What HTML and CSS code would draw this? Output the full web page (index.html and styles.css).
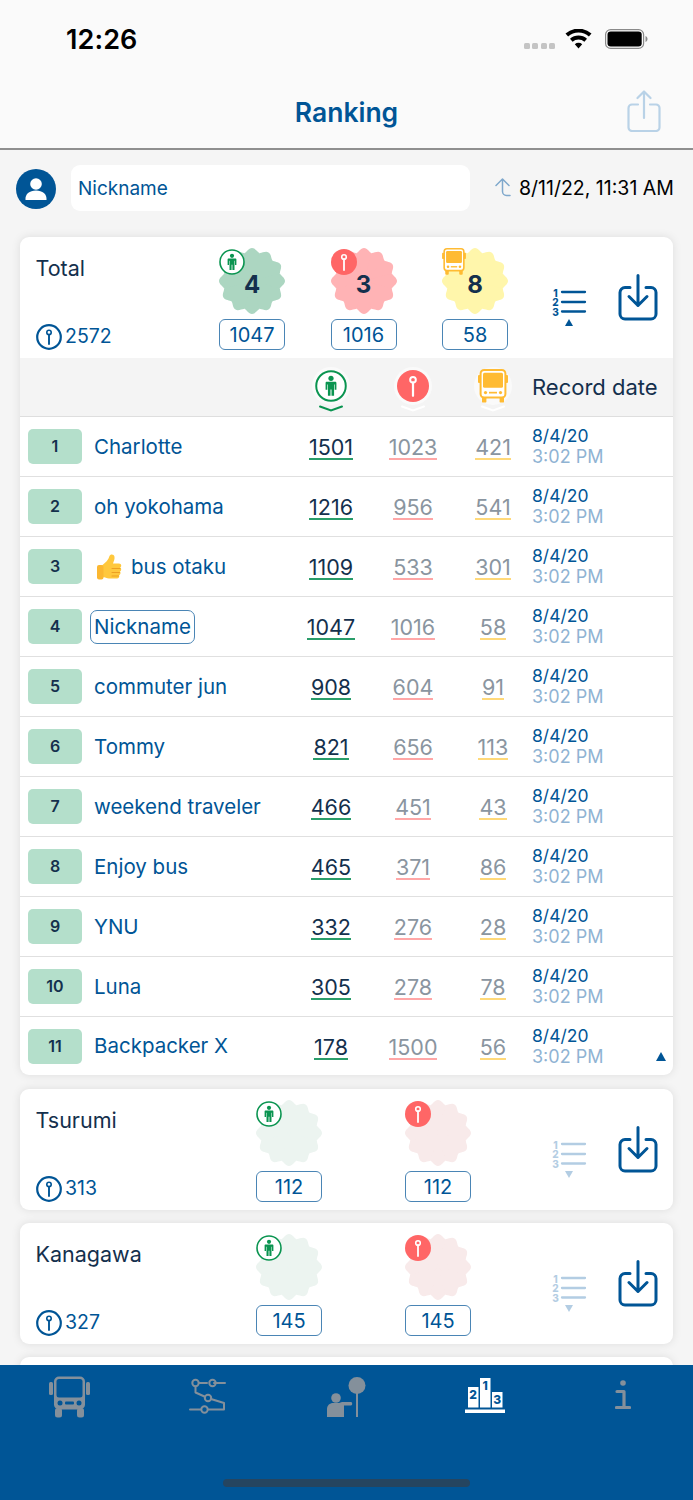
FILE: index.html
```html
<!DOCTYPE html>
<html lang="en">
<head>
<meta charset="utf-8">
<title>Ranking</title>
<link rel="stylesheet" href="styles.css">
</head>
<body>
<svg class="defs" aria-hidden="true">
  <symbol id="burst" viewBox="-33 -33 66 66">
    <circle r="28.400"/>
    <path id="lobe" d="M0 0L-7.500-28C-5.500-28.500-3.500-33 0-33S5.500-28.500 7.500-28Z"/>
    <use href="#lobe" transform="rotate(30)"/><use href="#lobe" transform="rotate(60)"/><use href="#lobe" transform="rotate(90)"/><use href="#lobe" transform="rotate(120)"/><use href="#lobe" transform="rotate(150)"/><use href="#lobe" transform="rotate(180)"/><use href="#lobe" transform="rotate(210)"/><use href="#lobe" transform="rotate(240)"/><use href="#lobe" transform="rotate(270)"/><use href="#lobe" transform="rotate(300)"/><use href="#lobe" transform="rotate(330)"/>
  </symbol>
  <symbol id="person" viewBox="0 0 26 26">
    <circle cx="13" cy="13" r="12" fill="#fff" stroke="#0a9450" stroke-width="1.600"/>
    <circle cx="13" cy="6.800" r="2.100" fill="#0a9450"/>
    <path d="M9.600 9.600h6.800c.6 0 1 .4 1 1v5.400h-1.400v-4.200h-.5V21h-2.100v-5.200h-.8V21h-2.100v-9.200H10V16H8.600v-5.400c0-.6.4-1 1-1z" fill="#0a9450"/>
  </symbol>
  <symbol id="pin-red" viewBox="0 0 26 26">
    <circle cx="13" cy="13" r="13" fill="#ff6666"/>
    <circle cx="13" cy="8" r="2.300" fill="none" stroke="#fff" stroke-width="1.600"/>
    <path d="M13 10v11" stroke="#fff" stroke-width="1.800" stroke-linecap="round"/>
  </symbol>
  <symbol id="bus-gold" viewBox="0 0 30 34">
    <rect x="2.600" y="1" width="24.800" height="27.500" rx="3.500" fill="#fff" stroke="#ffbb33" stroke-width="2"/>
    <rect x="5" y="3.800" width="20" height="15" rx="1.500" fill="#ffbb33"/>
    <rect x="0" y="6" width="2.600" height="8" rx="1" fill="#ffbb33"/>
    <rect x="27.400" y="6" width="2.600" height="8" rx="1" fill="#ffbb33"/>
    <circle cx="7.500" cy="23.600" r="1.600" fill="#ffbb33"/><circle cx="22.500" cy="23.600" r="1.600" fill="#ffbb33"/>
    <rect x="11" y="22.800" width="8" height="1.700" fill="#ffbb33"/>
    <rect x="4" y="28" width="4.400" height="5.600" rx="1.200" fill="#ffbb33"/><rect x="21.600" y="28" width="4.400" height="5.600" rx="1.200" fill="#ffbb33"/>
  </symbol>
  <symbol id="pin-outline" viewBox="0 0 26 26">
    <circle cx="13" cy="13" r="11.800" fill="none" stroke="#005596" stroke-width="2.200"/>
    <circle cx="13" cy="8.400" r="2.200" fill="none" stroke="#005596" stroke-width="1.600"/>
    <path d="M13 10.600V20" stroke="#005596" stroke-width="1.900" stroke-linecap="round"/>
  </symbol>
  <symbol id="download" viewBox="0 0 40 47">
    <path d="M12 13.500H7a5 5 0 0 0-5 5V40a5 5 0 0 0 5 5h26a5 5 0 0 0 5-5V18.500a5 5 0 0 0-5-5h-5M20 1.500v30M11 22.500l9 9 9-9" fill="none" stroke="#005596" stroke-width="3" stroke-linecap="round" stroke-linejoin="round"/>
  </symbol>
</svg>

<div class="screen">
  <header class="top">
    <div class="status">
      <span class="time">12:26</span>
      <div class="status-icons">
        <span class="dots"><i></i><i></i><i></i><i></i></span>
        <svg class="wifi" viewBox="0 0 27 20"><path d="M13.500 19.500l-3.700-4.300a5.500 5.500 0 0 1 7.400 0zM7.600 12.700L5 9.800a12.500 12.500 0 0 1 17 0l-2.600 2.900a8.700 8.700 0 0 0-11.800 0zM3.100 7.500L.5 4.600a19.500 19.500 0 0 1 26 0l-2.600 2.900a15.600 15.600 0 0 0-20.800 0z" fill="#000"/></svg>
        <svg class="battery" viewBox="0 0 43 20"><rect x=".6" y=".6" width="38" height="18.800" rx="5" fill="none" stroke="#8a8a8a" stroke-width="1.200"/><rect x="2.500" y="2.500" width="34.200" height="15" rx="3.300" fill="#000"/><path d="M40.500 7v6c1.300-.5 2-1.700 2-3s-.7-2.500-2-3z" fill="#8a8a8a"/></svg>
      </div>
    </div>
    <div class="nav">
      <h1 class="title">Ranking</h1>
      <svg class="share" viewBox="0 0 34 42"><path d="M11 14.500H5a3.500 3.500 0 0 0-3.500 3.500v19.500A3.500 3.500 0 0 0 5 41h24a3.500 3.500 0 0 0 3.500-3.500V18a3.500 3.500 0 0 0-3.500-3.500h-6M17 28V1.500M10.500 8L17 1.500 23.500 8" fill="none" stroke="#b9d2e7" stroke-width="2.200" stroke-linecap="round" stroke-linejoin="round"/></svg>
    </div>
  </header>

  <main class="main">
    <div class="user">
      <svg class="avatar" viewBox="0 0 40 40"><circle cx="20" cy="20" r="20" fill="#005596"/><circle cx="20" cy="15" r="5.800" fill="#fff"/><path d="M9.500 31c-.6-6 4-9.500 10.500-9.500S31 25 30.500 31z" fill="#fff"/></svg>
      <div class="nick-input">Nickname</div>
      <svg class="sync" viewBox="0 0 17 19"><path d="M8.500 1.500v12a4 4 0 0 0 4 4h3.500M2 7.500l6.500-6.500 6.500 6.500" fill="none" stroke="#7fa8cc" stroke-width="1.500" stroke-linecap="round" stroke-linejoin="round"/></svg>
      <span class="sync-date">8/11/22, 11:31 AM</span>
    </div>

    <div class="cards">
      <section class="card card-total">
        <div class="summary">
          <div class="sum-left sum-left-total">
            <div class="area">Total</div>
            <div class="count"><svg class="count-pin"><use href="#pin-outline"/></svg>2572</div>
          </div>
          <div class="stats stats-total">
            <div class="stat">
              <div class="burst-wrap">
                <svg class="burst green"><use href="#burst"/></svg>
                <svg class="burst-icon"><use href="#person"/></svg>
                <span class="burst-num">4</span>
              </div>
              <div class="pill">1047</div>
            </div>
            <div class="stat">
              <div class="burst-wrap">
                <svg class="burst pink"><use href="#burst"/></svg>
                <svg class="burst-icon"><use href="#pin-red"/></svg>
                <span class="burst-num">3</span>
              </div>
              <div class="pill">1016</div>
            </div>
            <div class="stat">
              <div class="burst-wrap">
                <svg class="burst yellow"><use href="#burst"/></svg>
                <svg class="burst-icon burst-bus"><use href="#bus-gold"/></svg>
                <span class="burst-num">8</span>
              </div>
              <div class="pill">58</div>
            </div>
          </div>
          <div class="actions">
            <div class="list-wrap">
              <svg class="list-icon" viewBox="0 0 34 28"><path class="list-lines" d="M10 4h23M10 14h23M10 23.500h23"/><text x="3.500" y="8.500" class="list-num">1</text><text x="3.500" y="18" class="list-num">2</text><text x="3.500" y="27.500" class="list-num">3</text></svg>
              <svg class="tri" viewBox="0 0 8 7"><polygon points="4,0 8,7 0,7"/></svg>
            </div>
            <svg class="download"><use href="#download"/></svg>
          </div>
        </div>

        <div class="table-head">
          <div class="th"><span class="halo"><svg class="th-icon"><use href="#person"/></svg></span><svg class="chev chev-green" viewBox="0 0 26 7"><path d="M2 1.500l11 4 11-4"/></svg></div>
          <div class="th"><span class="halo"><svg class="th-icon"><use href="#pin-red"/></svg></span><svg class="chev" viewBox="0 0 26 7"><path d="M2 1.500l11 4 11-4"/></svg></div>
          <div class="th"><span class="halo"><svg class="th-bus"><use href="#bus-gold"/></svg></span><svg class="chev" viewBox="0 0 26 7"><path d="M2 1.500l11 4 11-4"/></svg></div>
          <div class="th-date">Record date</div>
        </div>

        <div class="row"><div class="rank">1</div><div class="name">Charlotte</div><div class="n n1"><span>1501</span></div><div class="n n2"><span>1023</span></div><div class="n n3"><span>421</span></div><div class="date">8/4/20<small>3:02 PM</small></div></div>
        <div class="row"><div class="rank">2</div><div class="name">oh yokohama</div><div class="n n1"><span>1216</span></div><div class="n n2"><span>956</span></div><div class="n n3"><span>541</span></div><div class="date">8/4/20<small>3:02 PM</small></div></div>
        <div class="row"><div class="rank">3</div><div class="name"><svg class="thumb" viewBox="0 0 26 28"><path d="M6 12.500c3.500-3 6.500-5.500 7.500-9.500.4-2 4.500-2.500 5 .8.4 2.700-1 5-1.500 6.700h6c2.500 0 3 3 1.200 4 1.500 1 1.300 3.300-.2 4 1 1.200.6 3.100-.9 3.700.6 1.500-.4 3.300-2.100 3.300H13c-2.500 0-3.500-1.500-7-1.500z" fill="#ffc83d"/><rect x="1" y="12" width="6.500" height="14.500" rx="2" fill="#fbb731"/><path d="M16 15.500h8M16 19.500h7.500M16 23h6.500" stroke="#ec9f22" stroke-width="1.100" stroke-linecap="round" fill="none"/></svg>bus otaku</div><div class="n n1"><span>1109</span></div><div class="n n2"><span>533</span></div><div class="n n3"><span>301</span></div><div class="date">8/4/20<small>3:02 PM</small></div></div>
        <div class="row"><div class="rank">4</div><div class="name"><span class="me">Nickname</span></div><div class="n n1"><span>1047</span></div><div class="n n2"><span>1016</span></div><div class="n n3"><span>58</span></div><div class="date">8/4/20<small>3:02 PM</small></div></div>
        <div class="row"><div class="rank">5</div><div class="name">commuter jun</div><div class="n n1"><span>908</span></div><div class="n n2"><span>604</span></div><div class="n n3"><span>91</span></div><div class="date">8/4/20<small>3:02 PM</small></div></div>
        <div class="row"><div class="rank">6</div><div class="name">Tommy</div><div class="n n1"><span>821</span></div><div class="n n2"><span>656</span></div><div class="n n3"><span>113</span></div><div class="date">8/4/20<small>3:02 PM</small></div></div>
        <div class="row"><div class="rank">7</div><div class="name">weekend traveler</div><div class="n n1"><span>466</span></div><div class="n n2"><span>451</span></div><div class="n n3"><span>43</span></div><div class="date">8/4/20<small>3:02 PM</small></div></div>
        <div class="row"><div class="rank">8</div><div class="name">Enjoy bus</div><div class="n n1"><span>465</span></div><div class="n n2"><span>371</span></div><div class="n n3"><span>86</span></div><div class="date">8/4/20<small>3:02 PM</small></div></div>
        <div class="row"><div class="rank">9</div><div class="name">YNU</div><div class="n n1"><span>332</span></div><div class="n n2"><span>276</span></div><div class="n n3"><span>28</span></div><div class="date">8/4/20<small>3:02 PM</small></div></div>
        <div class="row"><div class="rank">10</div><div class="name">Luna</div><div class="n n1"><span>305</span></div><div class="n n2"><span>278</span></div><div class="n n3"><span>78</span></div><div class="date">8/4/20<small>3:02 PM</small></div></div>
        <div class="row"><div class="rank">11</div><div class="name">Backpacker X</div><div class="n n1"><span>178</span></div><div class="n n2"><span>1500</span></div><div class="n n3"><span>56</span></div><div class="date">8/4/20<small>3:02 PM</small></div><svg class="collapse" viewBox="0 0 10 9"><polygon points="5,0 10,9 0,9"/></svg></div>
      </section>

      <section class="card">
        <div class="summary">
          <div class="sum-left sum-left-region">
            <div class="area">Tsurumi</div>
            <div class="count"><svg class="count-pin"><use href="#pin-outline"/></svg>313</div>
          </div>
          <div class="stats stats-region">
            <div class="stat">
              <div class="burst-wrap"><svg class="burst green-light"><use href="#burst"/></svg><svg class="burst-icon"><use href="#person"/></svg></div>
              <div class="pill">112</div>
            </div>
            <div class="stat">
              <div class="burst-wrap"><svg class="burst pink-light"><use href="#burst"/></svg><svg class="burst-icon"><use href="#pin-red"/></svg></div>
              <div class="pill">112</div>
            </div>
          </div>
          <div class="actions">
            <div class="list-wrap list-faded">
              <svg class="list-icon" viewBox="0 0 34 28"><path class="list-lines" d="M10 4h23M10 14h23M10 23.500h23"/><text x="3.500" y="8.500" class="list-num">1</text><text x="3.500" y="18" class="list-num">2</text><text x="3.500" y="27.500" class="list-num">3</text></svg>
              <svg class="tri" viewBox="0 0 8 7"><polygon points="0,0 8,0 4,7"/></svg>
            </div>
            <svg class="download"><use href="#download"/></svg>
          </div>
        </div>
      </section>

      <section class="card">
        <div class="summary">
          <div class="sum-left sum-left-region">
            <div class="area">Kanagawa</div>
            <div class="count"><svg class="count-pin"><use href="#pin-outline"/></svg>327</div>
          </div>
          <div class="stats stats-region">
            <div class="stat">
              <div class="burst-wrap"><svg class="burst green-light"><use href="#burst"/></svg><svg class="burst-icon"><use href="#person"/></svg></div>
              <div class="pill">145</div>
            </div>
            <div class="stat">
              <div class="burst-wrap"><svg class="burst pink-light"><use href="#burst"/></svg><svg class="burst-icon"><use href="#pin-red"/></svg></div>
              <div class="pill">145</div>
            </div>
          </div>
          <div class="actions">
            <div class="list-wrap list-faded">
              <svg class="list-icon" viewBox="0 0 34 28"><path class="list-lines" d="M10 4h23M10 14h23M10 23.500h23"/><text x="3.500" y="8.500" class="list-num">1</text><text x="3.500" y="18" class="list-num">2</text><text x="3.500" y="27.500" class="list-num">3</text></svg>
              <svg class="tri" viewBox="0 0 8 7"><polygon points="0,0 8,0 4,7"/></svg>
            </div>
            <svg class="download"><use href="#download"/></svg>
          </div>
        </div>
      </section>

      <section class="card card-peek"></section>
    </div>
  </main>

  <nav class="tabbar">
    <div class="tabs">
      <div class="tab">
        <svg class="t-bus" viewBox="0 0 41 43"><rect x="5" y="1.500" width="31" height="33" rx="5" fill="#84909b"/><rect x="7.500" y="4" width="26" height="18.500" rx="2.500" fill="#005596"/><rect x="0" y="7" width="4" height="13" rx="1.500" fill="#84909b"/><rect x="37" y="7" width="4" height="13" rx="1.500" fill="#84909b"/><circle cx="11" cy="28" r="2.500" fill="#005596"/><circle cx="30" cy="28" r="2.500" fill="#005596"/><rect x="16" y="26.500" width="9" height="3" rx="1" fill="#005596"/><rect x="6" y="33" width="7" height="9.500" rx="2.500" fill="#84909b"/><rect x="28" y="33" width="7" height="9.500" rx="2.500" fill="#84909b"/></svg>
      </div>
      <div class="tab">
        <svg class="t-route" viewBox="0 0 37 36"><path d="M10 5h8M25 5h11M6.500 8.500v6l9 4M22 21l13 4v6.500H19M12 31.500H1" fill="none" stroke="#84909b" stroke-width="2" stroke-linecap="round" stroke-linejoin="round"/><circle cx="6.500" cy="5" r="3.200" fill="none" stroke="#84909b" stroke-width="2"/><circle cx="23.500" cy="5" r="3.200" fill="none" stroke="#84909b" stroke-width="2"/><circle cx="19" cy="20" r="3.200" fill="none" stroke="#84909b" stroke-width="2"/><circle cx="15.500" cy="31.500" r="3.200" fill="none" stroke="#84909b" stroke-width="2"/></svg>
      </div>
      <div class="tab">
        <svg class="t-stop" viewBox="0 0 39 40"><circle cx="30" cy="8.500" r="8.500" fill="#84909b"/><rect x="29" y="15" width="2" height="25" fill="#84909b"/><circle cx="9" cy="21" r="4.800" fill="#84909b"/><path d="M0 33c0-4 1.500-6 5-7h7l3-1h9c1.600 0 1.600 3.500 0 3.500h-7V40H0z" fill="#84909b"/></svg>
      </div>
      <div class="tab">
        <svg class="t-podium" viewBox="0 0 40 36"><rect x="3" y="9" width="10.500" height="20.500" fill="#fff"/><rect x="15" y="0" width="10.500" height="29.500" fill="#fff"/><rect x="27" y="14" width="10.500" height="15.500" fill="#fff"/><rect y="31.500" width="40" height="3.500" fill="#fff"/><text x="8.200" y="20.500" class="pod-num">2</text><text x="20.200" y="12" class="pod-num">1</text><text x="32.200" y="26" class="pod-num">3</text></svg>
      </div>
      <div class="tab">
        <svg class="t-info" viewBox="0 0 16 30"><circle cx="8" cy="3" r="2.800" fill="#84909b"/><path d="M2 11.500h7V26.500M1.500 27.500h13" fill="none" stroke="#84909b" stroke-width="3.200" stroke-linecap="round" stroke-linejoin="round"/></svg>
      </div>
    </div>
    <div class="home"></div>
  </nav>
</div>
</body>
</html>
```

FILE: styles.css
```css
* { box-sizing: border-box; }
html, body { margin: 0; padding: 0; }
body { background: #f5f5f5; font-family: Inter, "Liberation Sans", sans-serif; color: #14304d; }
.defs { width: 0; height: 0; display: block; overflow: hidden; }
.screen { width: 693px; height: 1500px; display: flex; flex-direction: column; overflow: hidden; }

/* top */
.top { height: 150px; flex: none; background: #fafafa; border-bottom: 2px solid #8f8f8f; }
.status { height: 70px; padding: 20px 45px 0 66px; display: flex; justify-content: space-between; align-items: flex-start; }
.time { font-size: 27px; line-height: 40px; font-weight: 600; color: #000; letter-spacing: .1px; }
.status-icons { display: flex; align-items: center; gap: 10px; padding-top: 9px; }
.dots { display: flex; gap: 2.500px; margin-top: 14px; }
.dots i { width: 6px; height: 6px; border-radius: 1.500px; background: #c4c4c4; display: block; }
.wifi { width: 27px; height: 20px; display: block; margin-top: -1px; }
.battery { width: 43px; height: 20px; display: block; margin-left: 3px; margin-top: -1px; }
.nav { height: 78px; position: relative; display: flex; justify-content: center; align-items: flex-start; }
.title { margin: 24px 0 0; font-size: 26.500px; line-height: 36px; font-weight: 600; color: #005596; }
.share { position: absolute; left: 627px; top: 20px; width: 34px; height: 42px; }

/* main */
.main { flex: 1; min-height: 0; overflow: hidden; background: #f5f5f5; }
.user { height: 87px; padding: 15px 16px 0 16px; display: flex; align-items: flex-start; }
.avatar { width: 40px; height: 40px; margin-top: 4px; flex: none; }
.nick-input { width: 399px; height: 46px; margin-left: 15px; background: #fff; border-radius: 9px; padding-left: 7px; font-size: 19px; line-height: 47px; color: #005596; flex: none; }
.sync { width: 17px; height: 19px; margin: 13px 0 0 24px; flex: none; }
.sync-date { margin-left: 8px; font-size: 19.500px; line-height: 46px; color: #000; white-space: nowrap; }
.cards { padding: 0 20px; display: flex; flex-direction: column; gap: 13px; }
.card { background: #fff; border-radius: 9px; box-shadow: 0 0 10px rgba(0,0,0,.1); overflow: hidden; flex: none; }
.card-total { margin-bottom: 1px; }
.card-peek { height: 60px; }

/* summary */
.summary { height: 121px; display: flex; }
.sum-left { padding: 18px 0 8px 16px; display: flex; flex-direction: column; justify-content: space-between; flex: none; }
.sum-left-total { width: 199px; }
.sum-left-region { width: 236px; }
.area { font-size: 21.500px; line-height: 26px; color: #14304d; margin-left: -.5px; }
.count { display: flex; align-items: center; font-size: 19.500px; line-height: 27px; color: #005596; }
.count-pin { width: 26px; height: 26px; margin-right: 3px; }
.stats { display: flex; padding-top: 11px; flex: none; }
.stats-total { gap: 45.500px; }
.stats-region { gap: 83px; }
.stat { width: 66px; display: flex; flex-direction: column; gap: 6px; }
.burst-wrap { width: 66px; height: 65px; position: relative; display: flex; align-items: center; justify-content: center; }
.burst { position: absolute; left: 0; top: 0; width: 66px; height: 66px; }
.green { fill: #acd6c1; }
.pink { fill: #ffb3b5; }
.yellow { fill: #fff6ab; }
.green-light { fill: #ecf4f0; }
.pink-light { fill: #f8eaea; }
.burst-icon { position: absolute; left: 0; top: 1px; width: 26px; height: 26px; }
.burst-bus { height: 27px; width: 24px; top: 0; }
.burst-num { position: relative; font-size: 24px; font-weight: 700; color: #14304d; margin-top: 7px; }
.pill { height: 31px; border: 1px solid #4a85b5; border-radius: 6px; text-align: center; font-size: 20px; line-height: 30px; color: #005596; }
.actions { margin-left: auto; padding: 37px 15px 0 0; display: flex; align-items: flex-start; gap: 32px; }
.list-wrap { width: 34px; color: #005596; margin-top: 14px; display: flex; flex-direction: column; align-items: center; gap: 3px; }
.list-icon { width: 34px; height: 28px; display: block; overflow: visible; }
.list-lines { fill: none; stroke: currentColor; stroke-width: 2.300; stroke-linecap: round; }
.list-num { font-size: 10px; font-weight: 800; text-anchor: middle; fill: currentColor; font-family: Inter, sans-serif; }
.tri { width: 8px; height: 7px; fill: currentColor; display: block; }
.list-faded { color: #b3cde3; }
.download { width: 40px; height: 47px; display: block; }

/* table */
.table-head { height: 59px; background: #f4f4f4; border-bottom: 1px solid #dedede; display: grid; grid-template-columns: 82px 82px 78px 1fr; padding-left: 270px; align-items: center; }
.th { display: flex; flex-direction: column; align-items: center; position: relative; height: 58px; padding-top: 9px; }
.halo { width: 38px; height: 38px; border-radius: 50%; background: #fafafa; display: flex; align-items: center; justify-content: center; flex: none; }
.th-icon { width: 32px; height: 32px; }
.th-bus { width: 30px; height: 34px; }
.chev { width: 26px; height: 7px; fill: none; stroke: #fff; stroke-width: 2; stroke-linecap: round; }
.chev-green { stroke: #0a9450; }
.th-date { font-size: 22px; color: #14304d; white-space: nowrap; }

/* rows */
.row { position: relative; height: 60px; padding-left: 8px; border-bottom: 1px solid #e0e0e0; display: grid; grid-template-columns: 54px 208px 82px 82px 78px 1fr; align-items: center; }
.row:last-child { height: 58px; border-bottom: 0; }
.rank { height: 35px; border-radius: 5px; background: #b4dfcb; text-align: center; font-size: 16px; line-height: 35px; font-weight: 600; color: #14304d; }
.name { display: flex; align-items: center; padding-left: 12px; font-size: 20.500px; line-height: 28px; color: #005596; white-space: nowrap; }
.thumb { width: 26px; height: 28px; margin: 0 9px 0 2px; flex: none; }
.me { border: 1px solid #4a85b5; border-radius: 7px; padding: 2px 3px; margin-left: -4px; }
.n { display: flex; justify-content: center; padding-top: 3px; font-size: 21.500px; line-height: 22px; }
.n span { display: block; border-bottom: 2px solid; }
.n1 { color: #14304d; }
.n1 span { border-color: #2a9d6a; }
.n2, .n3 { color: #8a95a0; }
.n2 span { border-color: #ffa7a7; }
.n3 span { border-color: #ffd97a; }
.date { font-size: 17.500px; line-height: 20px; color: #005596; white-space: nowrap; }
.date small { display: block; font-size: 18px; margin-top: 1px; color: #8fb3d3; }
.collapse { position: absolute; left: 636px; top: 35px; width: 10px; height: 9px; fill: #005596; }

/* tab bar */
.tabbar { height: 135px; flex: none; background: #005596; display: flex; flex-direction: column; align-items: center; }
.tabs { width: 100%; height: 114px; display: grid; grid-template-columns: repeat(5, 1fr); }
.tab { display: flex; justify-content: center; padding-top: 10px; }
.t-bus { width: 41px; height: 43px; }
.t-route { width: 37px; height: 36px; margin-top: 3px; }
.t-stop { width: 39px; height: 40px; margin-top: 2px; }
.t-podium { width: 40px; height: 36px; margin-top: 3px; }
.t-info { width: 16px; height: 30px; margin: 5px 2px 0 0; }
.pod-num { font-size: 12px; font-weight: 800; text-anchor: middle; fill: #005596; font-family: Inter, sans-serif; }
.home { width: 247px; height: 8px; border-radius: 4px; background: #254560; }
```
